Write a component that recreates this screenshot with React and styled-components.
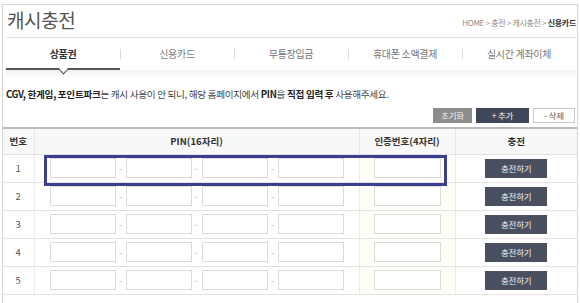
import React from "react";
import styled, { createGlobalStyle } from "styled-components";

const Global = createGlobalStyle`
  html, body { margin: 0; padding: 0; background: #fff; }
  body { font-family: "Noto Sans CJK KR", "Noto Sans", sans-serif; color: #333; }
  * { box-sizing: border-box; }
`;

const Frame = styled.div`
  margin: 4px 2px 0 2px;
  border: 1px solid #d6d6d6;
  border-bottom: none;
  height: 299px;
  overflow: hidden;
`;

const Header = styled.div`
  height: 33px;
  margin: 0 1px 0 3px;
  border-bottom: 1px solid #e2e2e2;
  display: flex;
  align-items: center;
  justify-content: space-between;
`;

const Title = styled.h1`
  margin: -4px 0 0 1px;
  font-size: 19px;
  font-weight: 400;
  letter-spacing: -0.4px;
  color: #555;
  line-height: 1;
`;

const Crumbs = styled.div`
  font-size: 8px;
  color: #8a8a8a;
  letter-spacing: -0.3px;
  margin-top: 2px;
  b { color: #333; font-weight: 700; }
`;

const Tabs = styled.div`
  display: flex;
  height: 32px;
  margin: 0 1px 0 3px;
`;

const Tab = styled.div`
  flex: 1;
  position: relative;
  display: flex;
  align-items: center;
  justify-content: center;
  font-size: 10px;
  letter-spacing: -0.3px;
  color: ${(p) => (p.$active ? "#333" : "#777")};
  font-weight: ${(p) => (p.$active ? 700 : 400)};
  border-bottom: 2px solid ${(p) => (p.$active ? "#555" : "transparent")};
  padding-top: 1px;
  &::before {
    content: "";
    display: ${(p) => (p.$first ? "none" : "block")};
    position: absolute;
    left: 0;
    top: 11px;
    height: 10px;
    width: 1px;
    background: #dcdcdc;
  }
  &::after {
    content: "";
    display: ${(p) => (p.$active ? "block" : "none")};
    position: absolute;
    left: 50%;
    bottom: -5px;
    width: 6px;
    height: 6px;
    margin-left: -3px;
    background: #fff;
    border-right: 1.5px solid #555;
    border-bottom: 1.5px solid #555;
    transform: rotate(45deg);
  }
`;

const TabShadow = styled.div`
  height: 8px;
  margin: 0 1px 0 3px;
  background: linear-gradient(#f1f1f1, #fff);
`;

const Notice = styled.p`
  margin: 9px 0 0 3px;
  font-size: 9.6px;
  line-height: 14px;
  letter-spacing: -0.3px;
  color: #444;
  b { font-weight: 700; color: #222; }
`;

const Actions = styled.div`
  display: flex;
  justify-content: flex-end;
  gap: 4px;
  margin: 7px 2px 0 0;
`;

const ActionButton = styled.button`
  height: 15px;
  width: ${(p) => p.$w}px;
  padding: 0;
  font-family: inherit;
  font-size: 8.5px;
  letter-spacing: -0.2px;
  line-height: 13px;
  cursor: pointer;
  background: ${(p) => (p.$tone === "gray" ? "#8d8d8d" : p.$tone === "navy" ? "#3f4859" : "#fff")};
  color: ${(p) => (p.$tone === "light" ? "#666" : "#f2f2f2")};
  border: 1px solid ${(p) => (p.$tone === "gray" ? "#8d8d8d" : p.$tone === "navy" ? "#3f4859" : "#c9c9c9")};
`;

const TableWrap = styled.div`
  position: relative;
  margin-top: 4px;
`;

const Table = styled.table`
  width: 100%;
  table-layout: fixed;
  border-collapse: collapse;
  border-top: 2px solid #b9b9b9;
`;

const Th = styled.th`
  height: 26px;
  font-size: 9.5px;
  font-weight: 700;
  color: #333;
  background: #f8f8f8;
  border-bottom: 1px solid #e0e0e0;
  border-left: 1px solid #e6e6e6;
  &:first-child { border-left: none; }
  padding: 0;
`;

const Td = styled.td`
  height: 28px;
  padding: 0;
  text-align: center;
  font-size: 9.5px;
  color: #555;
  border-bottom: 1px solid #e3e3e3;
  border-left: 1px solid #ececec;
  background: ${(p) => (p.$tint ? "#fffdf7" : "#fff")};
  &:first-child { border-left: none; }
`;

const PinGroup = styled.div`
  display: flex;
  justify-content: center;
  align-items: center;
`;

const Dash = styled.span`
  width: 10px;
  text-align: center;
  font-size: 8px;
  color: #999;
`;

const Field = styled.input`
  flex: none;
  width: ${(p) => p.$w}px;
  height: 20px;
  border: 1px solid #dadada;
  background: #fff;
  padding: 0 3px;
  font-size: 9px;
  outline: none;
  display: block;
  margin: ${(p) => (p.$center ? "0 auto" : "0")};
`;

const ChargeButton = styled.button`
  width: 62px;
  height: 19px;
  padding: 0;
  border: none;
  background: #4a5060;
  color: #eef0f3;
  font-family: inherit;
  font-size: 8.5px;
  letter-spacing: -0.2px;
  display: block;
  margin: 0 auto;
  cursor: pointer;
`;

const Highlight = styled.div`
  position: absolute;
  left: 41px;
  top: 28px;
  width: 403px;
  height: 31px;
  border: 3px solid #3b3f8e;
  pointer-events: none;
`;

const tabs = ["상품권", "신용카드", "무통장입금", "휴대폰 소액결제", "실시간 계좌이체"];

export default function App() {
  return (
    <>
      <Global />
      <Frame>
        <Header>
          <Title>캐시충전</Title>
          <Crumbs>
            HOME &gt; 충전 &gt; 캐시충전 &gt; <b>신용카드</b>
          </Crumbs>
        </Header>
        <Tabs>
          {tabs.map((t, i) => (
            <Tab key={t} $active={i === 0} $first={i === 0}>
              {t}
            </Tab>
          ))}
        </Tabs>
        <TabShadow />
        <Notice>
          <b>CGV, 한게임, 포인트파크</b>는 캐시 사용이 안 되니, 해당 홈페이지에서 <b>PIN</b>을 <b>직접 입력 후</b> 사용해주세요.
        </Notice>
        <Actions>
          <ActionButton $tone="gray" $w={39}>초기화</ActionButton>
          <ActionButton $tone="navy" $w={53}>+ 추가</ActionButton>
          <ActionButton $tone="light" $w={42}>- 삭제</ActionButton>
        </Actions>
        <TableWrap>
          <Table>
            <colgroup>
              <col style={{ width: 31 }} />
              <col style={{ width: 325 }} />
              <col style={{ width: 96 }} />
              <col />
            </colgroup>
            <thead>
              <tr>
                <Th>번호</Th>
                <Th>PIN(16자리)</Th>
                <Th>인증번호(4자리)</Th>
                <Th>충전</Th>
              </tr>
            </thead>
            <tbody>
              {[1, 2, 3, 4, 5].map((n) => (
                <tr key={n}>
                  <Td>{n}</Td>
                  <Td>
                    <PinGroup>
                      <Field $w={66} />
                      <Dash>-</Dash>
                      <Field $w={66} />
                      <Dash>-</Dash>
                      <Field $w={66} />
                      <Dash>-</Dash>
                      <Field $w={66} />
                    </PinGroup>
                  </Td>
                  <Td $tint>
                    <Field $w={67} $center />
                  </Td>
                  <Td>
                    <ChargeButton>충전하기</ChargeButton>
                  </Td>
                </tr>
              ))}
            </tbody>
          </Table>
          <Highlight />
        </TableWrap>
      </Frame>
    </>
  );
}
